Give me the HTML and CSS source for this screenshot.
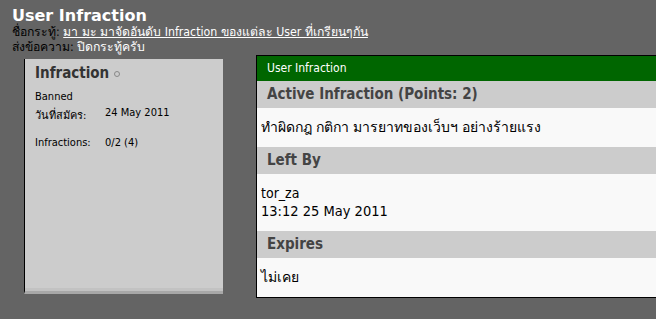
FILE: index.html
```html
<!DOCTYPE html>
<html lang="th">
<head>
  <meta charset="UTF-8">
  <title>User Infraction</title>
  <link rel="stylesheet" href="styles.css">
</head>
<body>
  <div id="page-head">
    <h1>User Infraction</h1>
    <p>ชื่อกระทู้: <a href="#">มา มะ มาจัดอันดับ Infraction ของแต่ละ User ที่เกรียนๆกัน</a></p>
    <p>ส่งข้อความ: <span class="msg">ปิดกระทู้ครับ</span></p>
  </div>

  <div id="content">
    <div class="user-card">
      <h2>Infraction <span class="status"></span></h2>
      <p class="rank">Banned</p>
      <dl>
        <dt>วันที่สมัคร:</dt><dd>24 May 2011</dd>
      </dl>
      <dl class="infractions">
        <dt>Infractions:</dt><dd>0/2 (4)</dd>
      </dl>
    </div>

    <div class="infraction-box">
      <div class="box-title">User Infraction</div>
      <h3>Active Infraction (Points: 2)</h3>
      <div class="box-row">ทำผิดกฎ กติกา มารยาทของเว็บฯ อย่างร้ายแรง</div>
      <h3>Left By</h3>
      <div class="box-row">
        <div>tor_za</div>
        <div class="date">13:12 25 May 2011</div>
      </div>
      <h3>Expires</h3>
      <div class="box-row">ไม่เคย</div>
    </div>
  </div>
</body>
</html>
```

FILE: styles.css
```css
body {
  margin: 0;
  background: #646464;
  font-family: 'DejaVu Sans Condensed', 'DejaVu Sans', sans-serif;
  font-size: 12px;
  color: #000;
  overflow: hidden;
}

#page-head {
  padding: 7px 12px 0;
  color: #fff;
}

#page-head h1 {
  margin: 0;
  font-family: 'DejaVu Sans', sans-serif;
  font-size: 16px;
  line-height: 18px;
}

#page-head p {
  margin: 0;
  font-size: 12.25px;
  line-height: 15px;
  color: #000;
}

#page-head a,
#page-head .msg {
  color: #fff;
}

#content {
  display: flex;
  align-items: flex-start;
  gap: 33px;
  padding-left: 24px;
}

.user-card {
  width: 188px;
  height: 232px;
  margin-top: 4px;
  padding-left: 10px;
  background: #cccccc;
  border-left: 1px solid #000;
  border-bottom: 3px solid #a8a8a8;
  box-shadow: inset 0 -3px 0 #c2c2c2;
  font-size: 11px;
}

.user-card h2 {
  margin: 5px 0 0;
  font-size: 15px;
  color: #333;
}

.user-card .status {
  display: inline-block;
  width: 4px;
  height: 4px;
  border: 1px solid #888;
  border-radius: 50%;
  vertical-align: middle;
}

.user-card .rank {
  margin: 8px 0 3px;
}

.user-card dl {
  display: flex;
  margin: 0;
}

.user-card dt {
  width: 70px;
}

.user-card dd {
  margin: 0;
}

.user-card .infractions {
  margin-top: 12px;
}

.infraction-box {
  flex: 1;
  background: #f9f9f9;
  border: 1px solid #000;
  border-right: none;
}

.box-title {
  background: #006600;
  color: #fff;
  padding: 0 10px;
  line-height: 25px;
}

.infraction-box h3 {
  margin: 0;
  background: #cccccc;
  color: #444;
  font-size: 15px;
  padding: 0 10px;
  line-height: 27px;
}

.box-row {
  padding: 10px 4px 11px;
  font-size: 14px;
  line-height: 18px;
}

.box-row .date {
  font-size: 14.5px;
}
```
